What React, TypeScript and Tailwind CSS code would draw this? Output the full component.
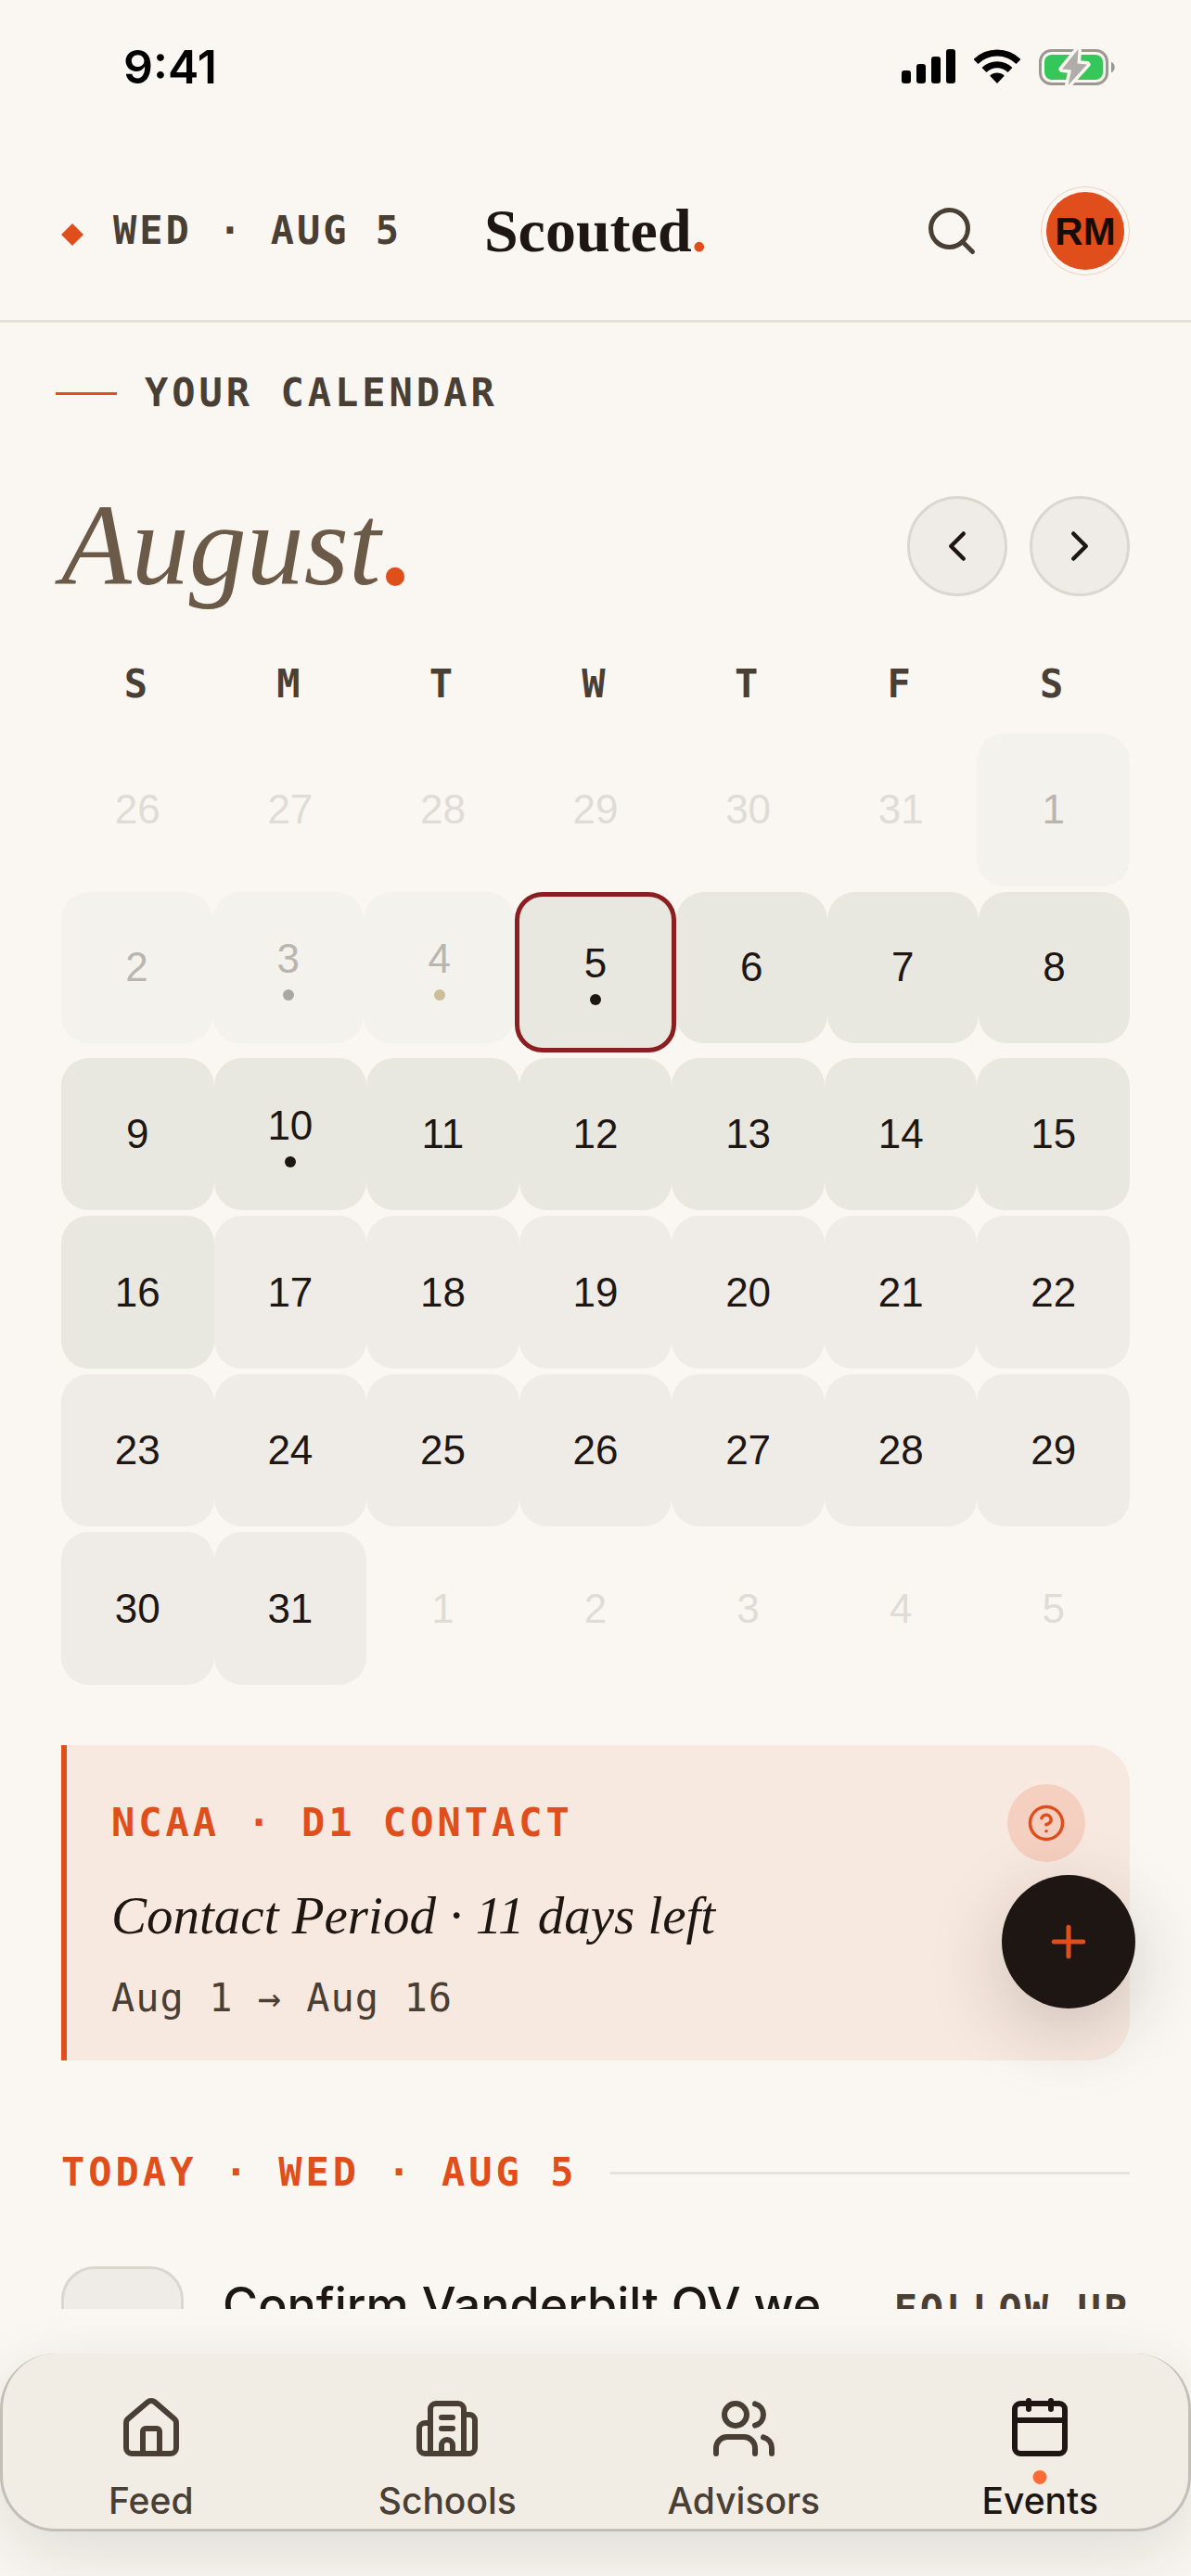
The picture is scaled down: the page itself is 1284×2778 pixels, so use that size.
import { useState } from 'react'
import { Building2, ChevronLeft, ChevronRight, CircleQuestionMark, House, Plus, Search, Users } from 'lucide-react'
import clsx from 'clsx'

type DayKind = 'outside' | 'past' | 'period' | 'default'

interface Day {
  key: string
  label: number
  kind: DayKind
  dot?: 'ink' | 'gold'
}

const WEEKDAYS = ['S', 'M', 'T', 'W', 'T', 'F', 'S']
const TODAY = 5
const PERIOD_END = 16
const DOTS: Record<number, 'ink' | 'gold'> = { 3: 'ink', 4: 'gold', 5: 'ink', 10: 'ink' }

// August 2026 starts on a Saturday, so the grid opens with six days of July
const DAYS: Day[] = Array.from({ length: 42 }, (_, i) => {
  const n = i - 5
  if (n < 1) return { key: `jul-${n + 31}`, label: n + 31, kind: 'outside' }
  if (n > 31) return { key: `sep-${n - 31}`, label: n - 31, kind: 'outside' }
  const kind = n < TODAY ? 'past' : n <= PERIOD_END ? 'period' : 'default'
  return { key: `aug-${n}`, label: n, kind, dot: DOTS[n] }
})

const WEEKS = Array.from({ length: 6 }, (_, i) => DAYS.slice(i * 7, i * 7 + 7))

const MONO = "font-['DejaVu_Sans_Mono',monospace] text-[42px] leading-[54px]"
const SERIF = "font-['Liberation_Serif',serif]"

function CalendarIcon({ className }: { className?: string }) {
  return (
    <svg
      viewBox="0 0 24 24"
      fill="none"
      stroke="currentColor"
      strokeWidth="2"
      strokeLinecap="round"
      strokeLinejoin="round"
      className={className}
      aria-hidden="true"
    >
      <path d="M8 2v3M16 2v3M3 9h18" />
      <rect x="3" y="3" width="18" height="18" rx="2" />
    </svg>
  )
}

function StatusBar() {
  return (
    <div className="flex h-36 shrink-0 items-center justify-between pr-[82px] pl-[133px]">
      <span className="text-[50px] leading-[60px] font-semibold text-black">9:41</span>
      <div className="flex items-center gap-5">
        <svg width="58" height="38" viewBox="0 0 58 38" aria-hidden="true">
          <rect x="0" y="23" width="10" height="14" rx="3" />
          <rect x="16" y="16" width="10" height="21" rx="3" />
          <rect x="32" y="8" width="10" height="29" rx="3" />
          <rect x="48" y="0" width="10" height="37" rx="3" />
        </svg>
        <svg width="50" height="38" viewBox="0 0 50 38" aria-hidden="true">
          <path d="M2 13.5a32.5 32.5 0 0 1 46 0" fill="none" stroke="#000" strokeWidth="7" />
          <path d="M11 22.5a20 20 0 0 1 28 0" fill="none" stroke="#000" strokeWidth="7" />
          <path d="M25 37 17.2 28.8a11 11 0 0 1 15.6 0Z" />
        </svg>
        <svg width="82" height="41" viewBox="0 -1 82 41" className="overflow-visible" aria-hidden="true">
          <rect x="1.5" y="1.5" width="72" height="36" rx="12" fill="none" stroke="#9b9891" strokeWidth="3" />
          <rect x="6" y="6" width="63" height="27" rx="8" fill="#35c759" />
          <path d="M78 13.5c5 2.500 5 9.500 0 12Z" fill="#9b9891" />
          <path
            d="M42.500 0 25 21.500 35 22.500 31.500 39 52 16.500 41.500 15.500Z"
            fill="#b0aca9"
            stroke="#faf7f2"
            strokeWidth="7"
            strokeLinejoin="round"
            paintOrder="stroke"
          />
        </svg>
      </div>
    </div>
  )
}

function Header() {
  return (
    <header className="grid shrink-0 grid-cols-[1fr_auto_1fr] items-center border-b-3 border-[#e5e1db] px-[66px] pt-[57px] pb-12">
      <div className="flex items-center gap-8">
        <svg viewBox="0 0 24 24" className="mt-2 size-6" fill="#e04e1b" aria-hidden="true">
          <path d="M12 0 24 12 12 24 0 12Z" />
        </svg>
        <span className={clsx(MONO, 'font-bold tracking-[3px] whitespace-nowrap text-[#4a3f35]')}>WED · AUG 5</span>
      </div>
      <div className={clsx(SERIF, 'text-[66px] leading-[72px] font-bold text-[#1e1612]')}>
        Scouted<span className="text-[#e04e1b]">.</span>
      </div>
      <div className="flex items-center justify-end gap-12">
        <button type="button" aria-label="Search" className="flex size-24 items-center justify-center text-[#4a3f35]">
          <Search size={60} />
        </button>
        <button
          type="button"
          className="flex size-24 items-center justify-center rounded-full border border-[#f3cdb9] text-[#140d09]"
        >
          <span className="flex size-[84px] items-center justify-center rounded-full bg-[#e04e1b] font-['Liberation_Sans',sans-serif] text-[42px] font-bold">
            RM
          </span>
        </button>
      </div>
    </header>
  )
}

interface DayCellProps {
  day: Day
  selected: boolean
  onSelect: (key: string) => void
}

function DayCell({ day, selected, onSelect }: DayCellProps) {
  return (
    <button
      type="button"
      onClick={() => onSelect(day.key)}
      className={clsx(
        "flex aspect-square flex-1 flex-col items-center justify-center gap-1.5 rounded-[30px] font-['Liberation_Sans',sans-serif] text-[44px] leading-[54px]",
        day.kind === 'outside' && 'text-[#dfdcd7]',
        day.kind === 'past' && 'bg-[#f3f2ed] text-[#bbb5af]',
        day.kind === 'period' && 'bg-[#e8e8e0] text-[#1e1612]',
        day.kind === 'default' && 'bg-[#efece7] text-[#1e1612]',
        selected && 'border-5 border-[#8b1e20]',
      )}
    >
      {day.label}
      {day.dot && (
        <span
          className={clsx(
            'size-3 rounded-full',
            day.dot === 'gold' ? 'bg-[#cebd99]' : day.kind === 'past' ? 'bg-[#a9a8a3]' : 'bg-[#1e1612]',
          )}
        />
      )}
    </button>
  )
}

function MonthCalendar() {
  const [selected, setSelected] = useState('aug-5')

  return (
    <section>
      <div className="mt-21 flex items-center justify-between">
        <h1 className={clsx(SERIF, 'text-[124px] leading-[108px] text-[#6b5a47] italic')}>
          August<span className="font-bold text-[#e04e1b] not-italic">.</span>
        </h1>
        <div className="flex gap-6">
          <button
            type="button"
            aria-label="Previous month"
            className="flex size-[108px] items-center justify-center rounded-full border-3 border-[#dad6d0] bg-[#efece7] text-[#1e1612]"
          >
            <ChevronLeft size={54} />
          </button>
          <button
            type="button"
            aria-label="Next month"
            className="flex size-[108px] items-center justify-center rounded-full border-3 border-[#dad6d0] bg-[#efece7] text-[#1e1612]"
          >
            <ChevronRight size={54} />
          </button>
        </div>
      </div>

      <div className={clsx(MONO, 'mt-17 grid grid-cols-7 text-center font-bold tracking-[4px] text-[#4a3f35]')}>
        {WEEKDAYS.map((d, i) => (
          <span key={i}>{d}</span>
        ))}
      </div>

      <div className="mt-[26px] flex flex-col gap-1.5">
        {WEEKS.map((week) => (
          <div key={week[0].key} className="flex items-start">
            {week.map((day) => (
              <DayCell key={day.key} day={day} selected={day.key === selected} onSelect={setSelected} />
            ))}
          </div>
        ))}
      </div>
    </section>
  )
}

function PeriodCard() {
  return (
    <section className="mt-[65px] rounded-r-[42px] border-l-6 border-[#e04e1b] bg-[#f8e9e0] px-12 pt-[42px] pb-10">
      <div className="flex items-center justify-between">
        <p className={clsx(MONO, 'font-bold tracking-[4px] text-[#e04e1b]')}>NCAA · D1 CONTACT</p>
        <button
          type="button"
          aria-label="About this period"
          className="flex size-[84px] items-center justify-center rounded-full bg-[#f5d0c1] text-[#e04e1b]"
        >
          <CircleQuestionMark size={42} />
        </button>
      </div>
      <h2 className={clsx(SERIF, 'mt-6 text-[57px] leading-[68px] text-[#1e1612] italic')}>
        Contact Period · 11 days left
      </h2>
      <p className={clsx(MONO, 'mt-7 tracking-[1px] text-[#4a3f35]')}>Aug 1 → Aug 16</p>
    </section>
  )
}

function Agenda() {
  return (
    <section className="mt-[94px]">
      <div className="flex items-center gap-9">
        <h3 className={clsx(MONO, 'font-bold tracking-[4px] whitespace-nowrap text-[#e04e1b]')}>
          TODAY · WED · AUG 5
        </h3>
        <div className="h-[3px] flex-1 bg-[#e5e1db]" />
      </div>
      <div className="mt-[74px] flex items-start">
        <div className="size-[132px] shrink-0 rounded-[36px] border-3 border-[#dad6d0] bg-[#efece7]" />
        <p className="ml-[42px] flex-1 pt-3 text-[52px] leading-[60px] font-medium whitespace-nowrap text-[#1e1612]">
          Confirm Vanderbilt OV we
        </p>
        <span className={clsx(MONO, 'pt-5 font-bold tracking-[3px] whitespace-nowrap text-[#4a3f35]')}>FOLLOW UP</span>
      </div>
    </section>
  )
}

const TABS = [
  { label: 'Feed', icon: House },
  { label: 'Schools', icon: Building2 },
  { label: 'Advisors', icon: Users },
  { label: 'Events', icon: CalendarIcon, active: true },
]

function TabBar() {
  return (
    <div className="shrink-0 py-12">
      <nav className="relative flex rounded-[60px] border-3 border-t-0 border-[#c4bfb6] bg-[#f1ece4] shadow-[0_24px_72px_rgba(30,22,18,0.12)]">
        {TABS.map(({ label, icon: Icon, active }) => (
          <a
            key={label}
            href={`#${label.toLowerCase()}`}
            aria-current={active ? 'page' : undefined}
            className={clsx(
              'relative flex flex-1 flex-col items-center gap-[18px] pt-[45px] pb-1.5',
              active ? 'text-[#1e1612]' : 'text-[#4a3f35]',
            )}
          >
            <Icon className="size-[72px]" />
            <span className="text-[39px] leading-[48px] font-medium">{label}</span>
            {active && (
              <span className="absolute top-[126px] left-1/2 size-[15px] -translate-x-1/2 rounded-full bg-[#ff6b35]" />
            )}
          </a>
        ))}
      </nav>
    </div>
  )
}

export default function App() {
  return (
    <div className="relative flex h-screen flex-col overflow-hidden bg-[#faf7f2] font-['Inter',sans-serif]">
      <StatusBar />
      <Header />
      <main className="min-h-0 flex-1 overflow-hidden px-[66px] pt-[49px]">
        <div className="-ml-1.5 flex items-center gap-[30px]">
          <span className="h-[3px] w-[66px] bg-[#e04e1b]" />
          <p className={clsx(MONO, 'font-bold tracking-[4px] text-[#4a3f35]')}>YOUR CALENDAR</p>
        </div>
        <MonthCalendar />
        <PeriodCard />
        <Agenda />
      </main>
      <TabBar />
      <button
        type="button"
        aria-label="Add event"
        className="absolute right-[60px] bottom-[612px] flex size-36 items-center justify-center rounded-full bg-[#1e1612] text-[#e04e1b] shadow-[0_24px_84px_rgba(30,22,18,0.2)]"
      >
        <Plus size={54} strokeWidth={2.25} />
      </button>
    </div>
  )
}
